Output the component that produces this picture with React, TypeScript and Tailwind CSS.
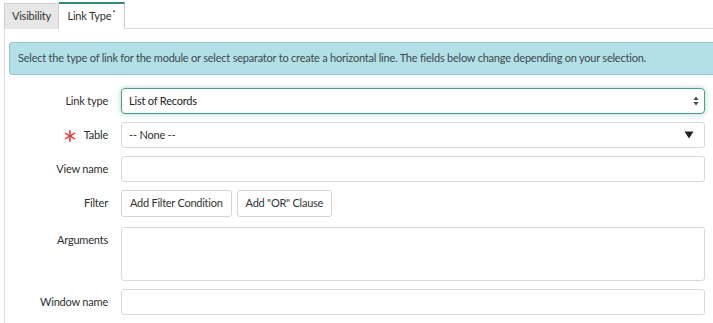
import React from "react";

const font = { fontFamily: '"Lato", "Open Sans", sans-serif' };

function Label({ children, required }: { children: React.ReactNode; required?: boolean }) {
  return (
    <div className="flex h-[26px] items-center justify-end gap-[8px] pr-[13px] text-[11px] tracking-[-0.2px] text-[#2e2e2e]">
      {required && (
        <svg width="12" height="12" viewBox="0 0 12 12" className="mt-[1px]">
          <g stroke="#e0403e" strokeWidth="1.6" strokeLinecap="round">
            <path d="M6 0.8 V11.2" />
            <path d="M1.5 3.4 L10.5 8.6" />
            <path d="M1.5 8.6 L10.5 3.4" />
          </g>
        </svg>
      )}
      <span>{children}</span>
    </div>
  );
}

const boxCls = "h-[26px] rounded-[3px] border border-[#d9d9d9] bg-white";
const btnCls =
  "h-[27px] rounded-[3px] border border-[#d4d4d4] bg-white px-[8px] text-[11px] tracking-[-0.25px] text-[#333]";

export default function App() {
  return (
    <div className="h-[323px] w-[713px] overflow-hidden bg-white" style={font}>
      {/* tabs */}
      <div className="flex h-[29px] items-end pl-[4px] pt-[2px]">
        <div className="flex h-[26px] w-[55px] items-center justify-center border border-b-0 border-[#cfcfcf] bg-[#e7e7e7] text-[11px] tracking-[-0.2px] text-[#333]">
          Visibility
        </div>
        <div className="flex h-[27px] w-[66px] items-center justify-center border-r border-t-[2px] border-r-[#cfcfcf] border-t-[#2d8c7c] bg-white text-[11px] tracking-[-0.2px] text-[#333]">
          Link Type<sup className="ml-[1px] text-[8px]">*</sup>
        </div>
        <div className="h-px flex-1 bg-[#dcdcdc]" />
      </div>

      {/* panel */}
      <div className="ml-[4px] h-[294px] border-l border-[#dcdcdc] pl-[4px] pt-[13px]">
        <div className="-mr-[4px] flex h-[33px] items-center rounded-[3px] border border-[#8ec9d2] bg-[#b3dfe6] pl-[8px] text-[11px] tracking-[-0.22px] text-[#3b4a4f]">
          Select the type of link for the module or select separator to create a horizontal line. The fields below change depending on your selection.
        </div>

        <div className="mt-[13px] grid grid-cols-[112px_1fr] gap-y-[8px] pr-[8px]">
          <Label>Link type</Label>
          <div className="flex h-[26px] items-center justify-between rounded-[4px] border-[1.5px] border-[#4d9e8e] bg-white pl-[7px] pr-[5px] text-[11px] tracking-[-0.2px] text-[#222] shadow-[0_0_5px_rgba(60,150,130,0.45)]">
            <span>List of Records</span>
            <svg width="6" height="10" viewBox="0 0 6 10">
              <path d="M3 0.5 L5.5 4 L0.5 4 Z" fill="#444" />
              <path d="M3 9.5 L5.5 6 L0.5 6 Z" fill="#444" />
            </svg>
          </div>

          <Label required>Table</Label>
          <div className={`${boxCls} flex items-center justify-between pl-[7px] pr-[10px] text-[11px] tracking-[-0.2px] text-[#333]`}>
            <span>-- None --</span>
            <svg width="10" height="8" viewBox="0 0 10 8">
              <path d="M0.5 0.5 L9.5 0.5 L5 7.5 Z" fill="#222" />
            </svg>
          </div>

          <Label>View name</Label>
          <div className={boxCls} />

          <div className="flex h-[27px] items-center justify-end pr-[13px] text-[11px] tracking-[-0.2px] text-[#2e2e2e]">Filter</div>
          <div className="flex gap-[5px]">
            <button className={btnCls}>Add Filter Condition</button>
            <button className={btnCls}>Add "OR" Clause</button>
          </div>

          <div className="flex h-[54px] items-start justify-end pr-[13px] pt-[7px] text-[11px] tracking-[-0.2px] text-[#2e2e2e]">Arguments</div>
          <div className="mt-[2px] h-[54px] rounded-[3px] border border-[#d9d9d9] bg-white" />

          <Label>Window name</Label>
          <div className={boxCls} />
        </div>
      </div>
    </div>
  );
}
